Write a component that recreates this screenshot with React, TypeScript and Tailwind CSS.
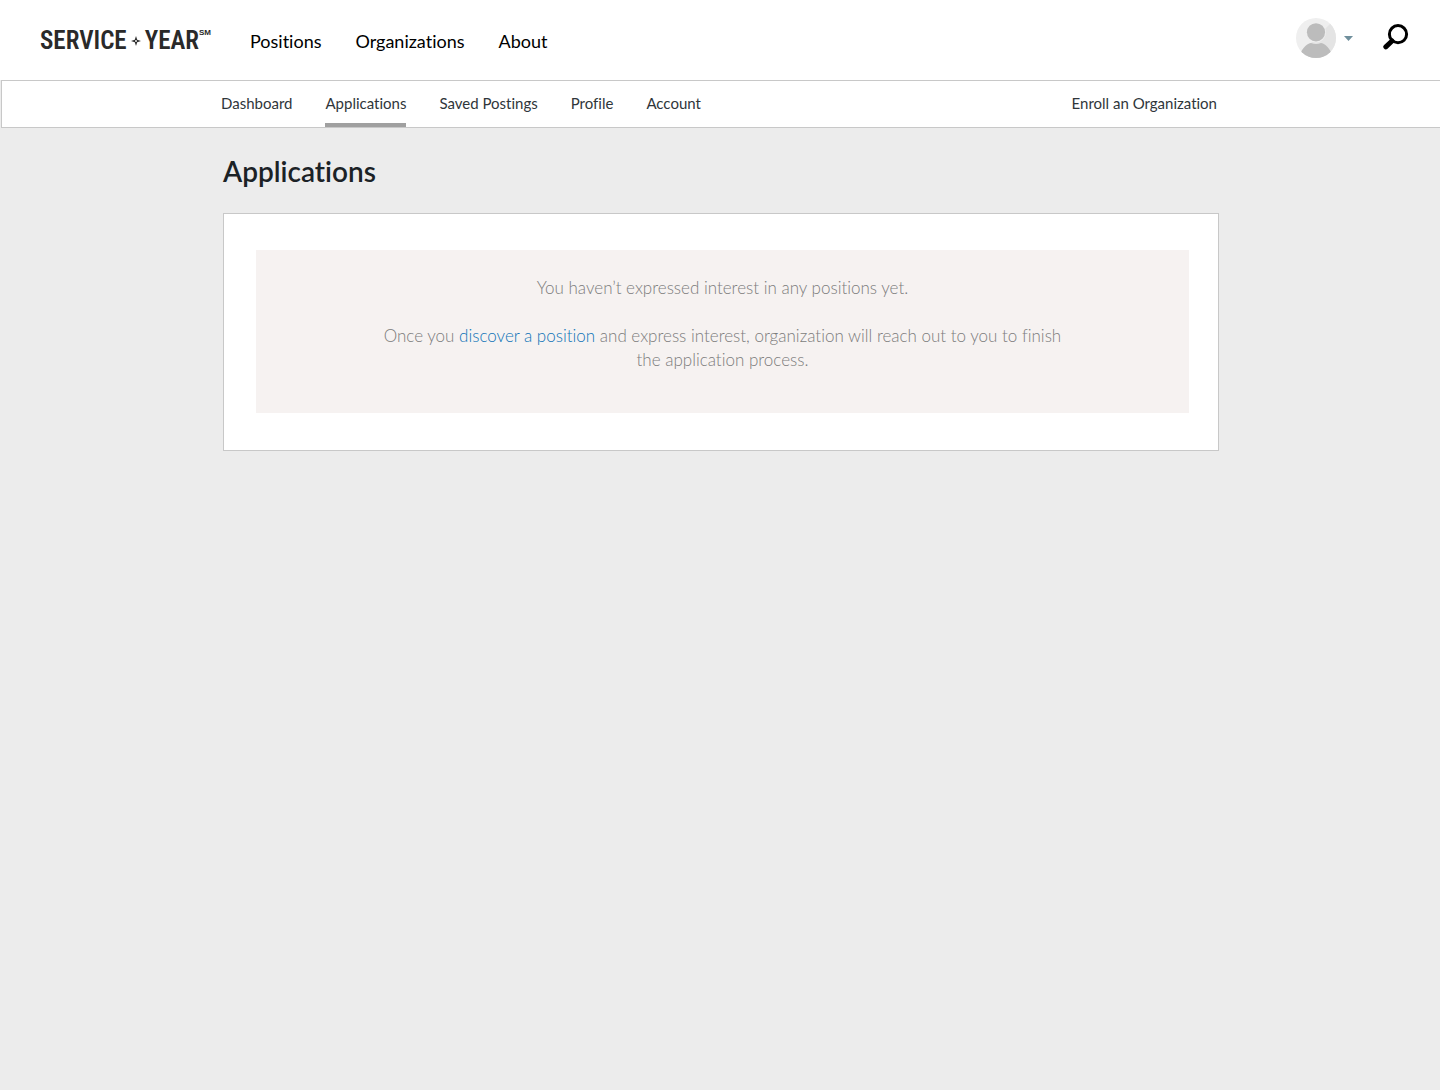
const mainLinks = ["Positions", "Organizations", "About"];
const accountLinks = ["Dashboard", "Applications", "Saved Postings", "Profile", "Account"];

function Logo() {
  return (
    <a
      href="#"
      aria-label="Service Year"
      className="flex w-[172px] shrink-0 items-center pt-0.5 font-['Roboto_Condensed','Liberation_Sans_Narrow','Liberation_Sans',sans-serif] text-[25px] leading-8 font-semibold text-[#2a2a2a]"
    >
      <span>SERVICE</span>
      <svg viewBox="0 0 10 10" className="mx-1 size-2.5 shrink-0" aria-hidden="true">
        <path d="M5 0 6.2 3.8 10 5 6.2 6.2 5 10 3.8 6.2 0 5 3.8 3.8Z" fill="#2a2a2a" />
        <circle cx="5" cy="5" r="0.9" fill="#fff" />
      </svg>
      <span>YEAR</span>
      <span className="self-start font-['Liberation_Sans',sans-serif] text-[8px] leading-4">SM</span>
    </a>
  );
}

function Avatar() {
  return (
    <svg viewBox="0 0 40 40" className="size-10" aria-hidden="true">
      <defs>
        <clipPath id="avatar-circle">
          <circle cx="20" cy="20" r="20" />
        </clipPath>
      </defs>
      <g clipPath="url(#avatar-circle)">
        <rect width="40" height="40" fill="#efefef" />
        <path d="M40 0 0 40H40Z" fill="#e4e4e4" />
        <circle cx="20" cy="14.5" r="10" fill="#efefef" />
        <circle cx="20" cy="14.3" r="9.1" fill="#bcbcbc" />
        <path d="M5 34C8 28 12 25.6 15 25Q20 27 25 25C28 25.6 32 28 35 34V40H5Z" fill="#bcbcbc" />
      </g>
    </svg>
  );
}

export default function App() {
  return (
    <div className="min-h-screen bg-[#ececec] font-['Lato',sans-serif] text-[#1b2226] [font-variant-ligatures:none]">
      <header className="flex h-20 items-center bg-white pr-[31px] pl-10">
        <Logo />
        <nav aria-label="Main" className="ml-[38px] flex flex-1 gap-[34px] pt-px text-[18px] leading-6 text-black">
          {mainLinks.map((label) => (
            <a key={label} href="#">
              {label}
            </a>
          ))}
        </nav>
        <div className="flex items-center gap-[30px] pb-1">
          <button type="button" aria-label="Account menu" className="flex items-center gap-2">
            <Avatar />
            <svg viewBox="0 0 9 5" className="h-[5px] w-[9px]" aria-hidden="true">
              <path d="M0 0H9L4.5 5Z" fill="#6f8f9c" />
            </svg>
          </button>
          <button type="button" aria-label="Search" className="pb-0.5">
            <svg viewBox="0 0 26 26" className="size-[26px]" fill="none" stroke="#000" aria-hidden="true">
              <circle cx="15" cy="10.2" r="8.6" strokeWidth="3" />
              <path d="M9 17 2.8 22.8" strokeWidth="5" strokeLinecap="round" />
            </svg>
          </button>
        </div>
      </header>

      <div className="ml-px border border-r-0 border-[#c8c8c8] bg-white">
        <nav
          aria-label="Account"
          className="mx-auto flex h-[46px] max-w-[1000px] items-stretch justify-between pr-1 text-[15px] leading-[44px] text-[#2f363a]"
        >
          <div className="flex gap-[33px]">
            {accountLinks.map((label) => (
              <a
                key={label}
                href="#"
                aria-current={label === "Applications" ? "page" : undefined}
                className="border-b-4 border-transparent aria-[current=page]:border-[#a0a0a0]"
              >
                {label}
              </a>
            ))}
          </div>
          <a href="#">Enroll an Organization</a>
        </nav>
      </div>

      <main className="pl-0.5">
        <div className="mx-auto max-w-[996px] pt-[23px]">
          <h1 className="text-[28px] leading-10 font-semibold">Applications</h1>
          <section className="mt-[22px] border border-[#c8c8c8] bg-white pt-9 pr-[29px] pb-[37px] pl-8">
            <div className="bg-[#f6f2f1] px-30 pt-[26px] pb-[41px] text-center text-[17px] leading-6 font-light text-[#7c7c7c]">
              <p>You haven’t expressed interest in any positions yet.</p>
              <p className="mt-6">
                Once you{" "}
                <a href="#" className="text-[#0f74b8]">
                  discover a position
                </a>{" "}
                and express interest, organization will reach out to you to finish the application process.
              </p>
            </div>
          </section>
        </div>
      </main>
    </div>
  );
}
